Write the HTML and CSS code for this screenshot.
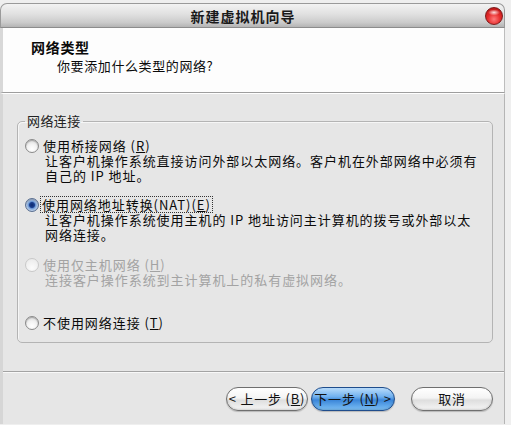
FILE: index.html
```html
<!DOCTYPE html>
<html lang="zh-CN">
<head>
<meta charset="utf-8">
<title>新建虚拟机向导</title>
<link rel="stylesheet" href="styles.css">
</head>
<body>
<div class="window">
  <div class="titlebar">
    <span class="title">新建虚拟机向导</span>
    <span class="close"></span>
  </div>
  <div class="header">
    <div class="h1">网络类型</div>
    <div class="h2">你要添加什么类型的网络?</div>
  </div>
  <div class="content">
    <fieldset class="group">
      <legend>网络连接</legend>
      <div class="opt opt1">
        <div class="label"><span class="radio"></span><span class="text">使用桥接网络 (<u>R</u>)</span></div>
        <div class="desc">让客户机操作系统直接访问外部以太网络。客户机在外部网络中必须有<br>自己的 IP 地址。</div>
      </div>
      <div class="opt opt2">
        <div class="label"><span class="radio checked"></span><span class="text focus">使用网络地址转换(NAT)(<u>E</u>)</span></div>
        <div class="desc">让客户机操作系统使用主机的 IP 地址访问主计算机的拨号或外部以太<br>网络连接。</div>
      </div>
      <div class="opt opt3 disabled">
        <div class="label"><span class="radio"></span><span class="text">使用仅主机网络 (<u>H</u>)</span></div>
        <div class="desc">连接客户操作系统到主计算机上的私有虚拟网络。</div>
      </div>
      <div class="opt opt4">
        <div class="label"><span class="radio"></span><span class="text">不使用网络连接 (<u>T</u>)</span></div>
      </div>
    </fieldset>
    <div class="sep"></div>
    <div class="buttons">
      <span class="btn btn-prev">&lt; 上一步 (<u>B</u>)</span>
      <span class="btn btn-next">下一步 (<u>N</u>) &gt;</span>
      <span class="btn btn-cancel">取消</span>
    </div>
  </div>
</div>
</body>
</html>
```
FILE: styles.css
```css
html, body {
  margin: 0;
  padding: 0;
}
body {
  background: #efefef;
  padding-top: 3px;
  width: 511px;
  height: 422px;
  overflow: hidden;
  font-family: "Noto Sans CJK SC", "Noto Sans", sans-serif;
  color: #0a0a0a;
}
.window {
  width: 505px;
}
.titlebar {
  height: 25px;
  display: flex;
  align-items: center;
  background: linear-gradient(#f3f3f3 0%, #e0e0e0 45%, #cbcbcb 80%, #b4b4b4 100%);
  border-radius: 7px 7px 0 0;
  border: 1px solid #9a9a9a;
  border-bottom: 1px solid #8c8c8c;
  box-sizing: border-box;
  padding-right: 1px;
}
.title {
  flex: 1;
  text-align: center;
  font-size: 14px;
  font-weight: bold;
  letter-spacing: 1px;
  line-height: 18px;
  color: #1a1a1a;
}
.close {
  width: 18px;
  height: 18px;
  border-radius: 50%;
  box-sizing: border-box;
  border: 1px solid #7c1b1b;
  background:
    radial-gradient(ellipse 6px 3px at 50% 28%, rgba(255,255,255,.85), rgba(255,255,255,0)),
    radial-gradient(circle at 50% 70%, #ff7a7a 0%, #e62c2c 45%, #a80c0c 100%);
}
.header {
  background: #fdfdfd;
  height: 65px;
  box-sizing: border-box;
  padding: 10px 0 0 28px;
  border-left: 3px solid #d8d8d8;
  border-right: 1px solid #bdbdbd;
  border-bottom: 1px solid #9e9e9e;
}
.h1 {
  font-size: 14px;
  font-weight: bold;
  letter-spacing: 0.7px;
  line-height: 18px;
}
.h2 {
  font-size: 13px;
  letter-spacing: 0.6px;
  line-height: 18px;
  margin: 1px 0 0 26px;
}
.content {
  background: #e6e6e6;
  border-left: 3px solid #d6d6d6;
  border-right: 1px solid #b5b5b5;
  border-top: 1px solid #ffffff;
  height: 331px;
  box-sizing: border-box;
  padding-top: 19px;
}
.group {
  margin: 0 11px 0 14px;
  padding: 9px 7px 12px 7px;
  border: 1px solid #b4b4b4;
  border-radius: 5px;
  box-shadow: inset 1px 1px 0 #f6f6f6;
  font-size: 13px;
  letter-spacing: 0.95px;
  line-height: 15px;
  min-width: 0;
}
.group legend {
  padding: 0 2px;
  font-size: 13px;
  line-height: 16px;
  letter-spacing: 0.4px;
  color: #222;
}
.opt2 { margin-top: 14px; }
.opt3 { margin-top: 15px; }
.opt4 { margin-top: 28px; }
.label {
  display: flex;
  align-items: center;
  height: 15px;
  white-space: nowrap;
}
.text {
  margin-left: 4px;
}
.text.focus {
  outline: 1px dotted #333;
  outline-offset: 0;
  padding: 0 1px;
  margin-left: 2px;
}
.desc {
  margin-left: 20px;
  white-space: nowrap;
}
.radio {
  width: 14px;
  height: 14px;
  flex: none;
  box-sizing: border-box;
  border-radius: 50%;
  border: 1px solid #8a8a8a;
  background: radial-gradient(circle at 50% 75%, #ffffff 0%, #f2f2f2 45%, #cfcfcf 100%);
  box-shadow: inset 0 1px 1px rgba(0,0,0,.25);
}
.radio.checked {
  border-color: #5a6f90;
  background: radial-gradient(circle at 50% 50%, #0d2a6e 0, #1b3f8f 2.5px, #6e9ad6 3.6px, #b8cdea 5.5px, #8fa8c8 7px);
}
.disabled {
  color: #a3a3a3;
}
.disabled .radio {
  border-color: #c9c9c9;
  background: radial-gradient(circle at 50% 75%, #fbfbfb, #e8e8e8);
  box-shadow: none;
}
.sep {
  margin-top: 28px;
  height: 1px;
  background: #a3a3a3;
  border-bottom: 1px solid #f8f8f8;
}
.buttons {
  display: flex;
  justify-content: flex-end;
  margin-top: 14px;
  padding-right: 11px;
}
.btn {
  height: 24px;
  box-sizing: border-box;
  border-radius: 12px;
  font-size: 13px;
  letter-spacing: 0.8px;
  line-height: 22px;
  text-align: center;
  white-space: nowrap;
  border: 1px solid #6f6f6f;
  background: linear-gradient(#ffffff 0%, #f4f4f4 45%, #dedede 55%, #f6f6f6 100%);
  box-shadow: inset 0 -1px 2px rgba(0,0,0,.15), 0 1px 1px rgba(0,0,0,.2);
  color: #111;
}
.btn-prev { width: 82px; }
.btn-next {
  width: 84px;
  margin-left: 3px;
  border-color: #1f4d8c;
  background: linear-gradient(#b9dcfb 0%, #6fb0ef 40%, #3b86d9 55%, #7cc0f6 100%);
}
.btn-cancel {
  width: 82px;
  margin-left: 16px;
}
```
